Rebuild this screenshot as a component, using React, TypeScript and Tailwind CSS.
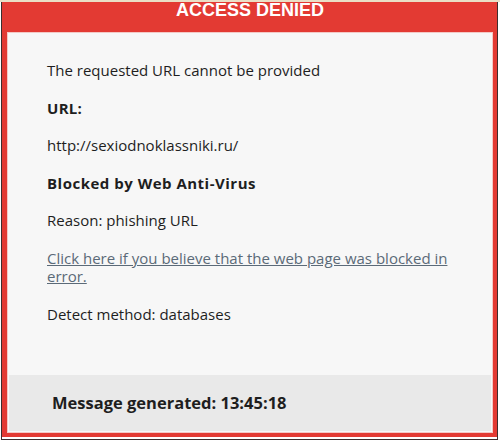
import React from "react";

export default function App() {
  const body = { fontFamily: '"Open Sans", "Noto Sans", sans-serif' };
  return (
    <div className="w-[500px] h-[442px] bg-white relative overflow-hidden">
      <div className="h-[2px] bg-[#eadfc6]" />
      <div className="ml-[1px] w-[497px] h-[438px] border-x border-b border-[#3d2e2e] bg-white flex flex-col">
        <div className="flex-1 bg-[#e33a33] flex flex-col pl-[5px] pr-[4px] pb-[4px]">
          <div
            className="h-[31px] -mt-[1px] text-center text-white font-bold text-[18px] leading-[18px]"
            style={{ fontFamily: '"Liberation Sans", Arial, sans-serif' }}
          >
            ACCESS DENIED
          </div>
          <div className="flex-1 bg-[#f7f7f7] border border-[#f3c9c6] flex flex-col" style={body}>
            <div className="flex-1 pl-[39px] pr-[38px] pt-[28px] text-[15px] leading-[18.4px] text-[#1e1e1e]">
              <p className="mb-[19.2px]">The requested URL cannot be provided</p>
              <p className="mb-[19.2px] font-bold tracking-[0.3px]">URL:</p>
              <p className="mb-[19.2px]">http://sexiodnoklassniki.ru/</p>
              <p className="mb-[19.2px] font-bold tracking-[0.5px]">Blocked by Web Anti-Virus</p>
              <p className="mb-[19.2px]">Reason: phishing URL</p>
              <p className="mb-[19.2px]">
                <a className="underline text-[#5b6a78]" href="#">
                  Click here if you believe that the web page was blocked in error.
                </a>
              </p>
              <p>Detect method: databases</p>
            </div>
            <div className="mx-[1px] mb-[1px] h-[56px] bg-[#e9e9e9] flex items-center pl-[43px] text-[16.5px] font-bold text-[#1e1e1e]">
              Message generated: 13:45:18
            </div>
          </div>
        </div>
        <div className="h-[2px] bg-white" />
      </div>
    </div>
  );
}
